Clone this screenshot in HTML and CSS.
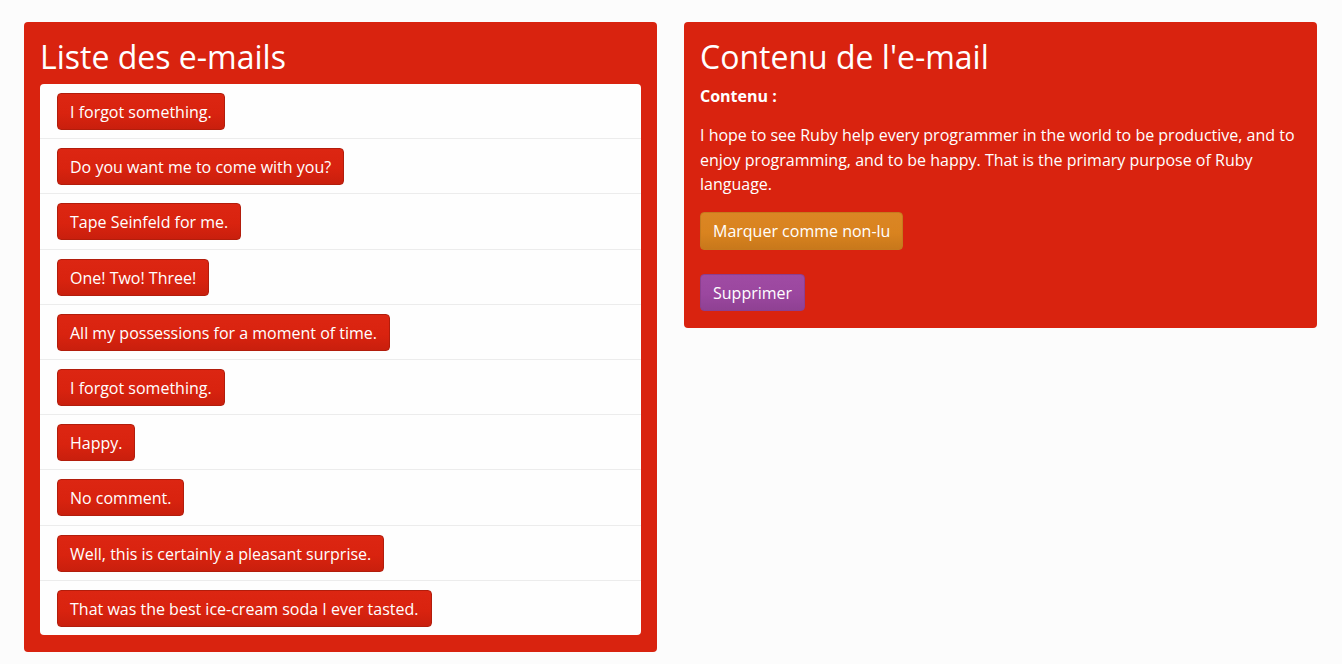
FILE: index.html
```html
<!DOCTYPE html>
<html lang="fr">
<head>
<meta charset="utf-8">
<title>E-mails</title>
<link rel="stylesheet" href="styles.css">
</head>
<body>
<div class="layout">
  <section class="panel">
    <h2 class="panel-title">Liste des e-mails</h2>
    <ul class="mail-list">
      <li class="mail-row"><button class="btn btn-primary">I forgot something.</button></li>
      <li class="mail-row"><button class="btn btn-primary">Do you want me to come with you?</button></li>
      <li class="mail-row"><button class="btn btn-primary">Tape Seinfeld for me.</button></li>
      <li class="mail-row"><button class="btn btn-primary">One! Two! Three!</button></li>
      <li class="mail-row"><button class="btn btn-primary">All my possessions for a moment of time.</button></li>
      <li class="mail-row"><button class="btn btn-primary">I forgot something.</button></li>
      <li class="mail-row"><button class="btn btn-primary">Happy.</button></li>
      <li class="mail-row"><button class="btn btn-primary">No comment.</button></li>
      <li class="mail-row"><button class="btn btn-primary">Well, this is certainly a pleasant surprise.</button></li>
      <li class="mail-row"><button class="btn btn-primary">That was the best ice-cream soda I ever tasted.</button></li>
    </ul>
  </section>
  <section class="panel panel-content">
    <h2 class="panel-title">Contenu de l'e-mail</h2>
    <p class="label">Contenu :</p>
    <p class="body-text">I hope to see Ruby help every programmer in the world to be productive, and to enjoy programming, and to be happy. That is the primary purpose of Ruby language.</p>
    <div class="actions">
      <button class="btn btn-orange">Marquer comme non-lu</button>
      <button class="btn btn-purple">Supprimer</button>
    </div>
  </section>
</div>
</body>
</html>
```

FILE: styles.css
```css
* { box-sizing: border-box; }

body {
  margin: 0;
  background: #fcfcfc;
  font-family: "Open Sans", "Noto Sans", sans-serif;
  font-size: 16px;
  color: #fff;
}

.layout {
  display: grid;
  grid-template-columns: 633px 633px;
  column-gap: 27px;
  align-items: start;
  padding: 22px 24px;
}

.panel {
  background: #d9230f;
  border-radius: 4px;
  padding: 18px 16px 17px;
}

.panel-title {
  margin: 0 0 11px;
  font-size: 32px;
  line-height: 33px;
  font-weight: 400;
  color: #fff;
}

.mail-list {
  list-style: none;
  margin: 0;
  padding: 0;
  background: #fefefe;
  border-radius: 4px;
}

.mail-row {
  display: flex;
  align-items: flex-start;
  padding: 9px 17px 8.2px;
  border-bottom: 1px solid #ececec;
}

.mail-row:last-child {
  border-bottom: none;
}

.btn {
  display: inline-block;
  font-family: inherit;
  font-size: 16px;
  line-height: 21px;
  height: 37px;
  padding: 8px 12px 6px;
  border-radius: 4px;
  color: #fff;
  cursor: pointer;
}

.btn-primary {
  background: linear-gradient(#dc2612, #d9230f 55%, #c91f0d);
  border: 1px solid #b21d0c;
}

.btn-orange {
  background: linear-gradient(#db8624, #d9831f 55%, #c8781b);
  border: 1px solid #c57a1e;
  height: 38px;
  padding: 8px 12px 7px;
}

.btn-purple {
  background: linear-gradient(#9f4ba3, #9b479f 55%, #8f4193);
  border: 1px solid #8c3f90;
}

.label {
  margin: 0 0 16px;
  padding-top: 1px;
  font-weight: 700;
  line-height: 22px;
}

.body-text {
  margin: 0 0 15px;
  line-height: 24.5px;
}

.actions {
  display: flex;
  flex-direction: column;
  align-items: flex-start;
  gap: 24px;
}
```
